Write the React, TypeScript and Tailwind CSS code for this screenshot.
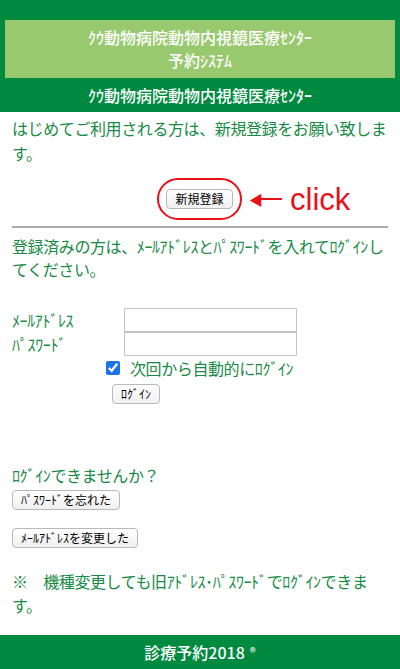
import React from 'react';

const font = { fontFamily: '"Noto Sans CJK JP", "Noto Sans", sans-serif' };

const SmallButton: React.FC<{ children: React.ReactNode; className?: string }> = ({ children, className = '' }) => (
  <button
    type="button"
    className={`h-[20px] px-[8px] text-[12px] leading-none tracking-normal text-black bg-gradient-to-b from-white to-[#f0f0f0] border border-[#b8b8b8] rounded-[4px] ${className}`}
  >
    {children}
  </button>
);

const App: React.FC = () => {
  return (
    <div className="w-[400px] h-[669px] bg-white flex flex-col text-[#178a45]" style={font}>
      {/* header */}
      <div className="bg-[#008a40] pt-[20px]">
        <div className="mx-[5px] h-[58px] bg-[#99c96f] flex flex-col items-center justify-center text-white text-[16px] leading-[23px] font-medium">
          <div>ｸｳ動物病院動物内視鏡医療ｾﾝﾀｰ</div>
          <div>予約ｼｽﾃﾑ</div>
        </div>
        <div className="h-[34px] flex items-center justify-center text-white text-[16px] font-medium">
          ｸｳ動物病院動物内視鏡医療ｾﾝﾀｰ
        </div>
      </div>

      <div className="px-[12px] flex-1 tracking-[-0.4px]">
        <p className="mt-[4px] text-[16px] leading-[25px]">
          はじめてご利用される方は、新規登録をお願い致します。
        </p>

        <div className="mt-[12px] h-[42px] flex items-center tracking-normal">
          <div className="ml-[145px] w-[85px] h-[42px] rounded-[21px] border-2 border-[#e8101a] flex items-center justify-center">
            <SmallButton className="px-[7px]">新規登録</SmallButton>
          </div>
          <div className="ml-[7px] flex items-center">
            <span className="text-[#e8101a] text-[14px] leading-none">◀</span>
            <span className="w-[22px] h-[2px] bg-[#e8101a] -ml-[3px]"></span>
          </div>
          <span className="ml-[8px] text-[#e8101a] text-[31px] leading-none" style={{ fontFamily: '"Liberation Sans", sans-serif' }}>
            click
          </span>
        </div>

        <hr className="mt-[6px] border-0 h-[2px] bg-[#a9a9a9]" />

        <p className="mt-[7px] text-[16px] leading-[23px]">
          登録済みの方は、ﾒｰﾙｱﾄﾞﾚｽとﾊﾟｽﾜｰﾄﾞを入れてﾛｸﾞｲﾝしてください。
        </p>

        <div className="mt-[27px] flex flex-col">
          <div className="flex items-center h-[24px]">
            <span className="w-[112px] text-[16px]">ﾒｰﾙｱﾄﾞﾚｽ</span>
            <input className="w-[173px] h-[24px] border border-[#c4c4c4] outline-none" />
          </div>
          <div className="flex items-center h-[24px]">
            <span className="w-[112px] text-[16px]">ﾊﾟｽﾜｰﾄﾞ</span>
            <input type="password" className="w-[173px] h-[24px] border border-[#c4c4c4] outline-none" />
          </div>
          <label className="mt-[1px] ml-[94px] flex items-center gap-[10px] h-[22px] text-[16px]">
            <input type="checkbox" defaultChecked className="w-[14px] h-[14px] accent-[#1a73e8]" />
            <span>次回から自動的にﾛｸﾞｲﾝ</span>
          </label>
          <div className="ml-[100px] mt-[1px]">
            <SmallButton>ﾛｸﾞｲﾝ</SmallButton>
          </div>
        </div>

        <p className="mt-[60px] text-[16px] leading-[22px]">ﾛｸﾞｲﾝできませんか？</p>
        <SmallButton>ﾊﾟｽﾜｰﾄﾞを忘れた</SmallButton>
        <div>
          <SmallButton className="mt-[18px]">ﾒｰﾙｱﾄﾞﾚｽを変更した</SmallButton>
        </div>

        <p className="mt-[21px] text-[16px] leading-[24px]">
          ※　機種変更しても旧ｱﾄﾞﾚｽ･ﾊﾟｽﾜｰﾄﾞでﾛｸﾞｲﾝできます。
        </p>
      </div>

      <footer className="h-[34px] bg-[#008a40] flex items-center justify-center text-white text-[16px] font-medium">
        診療予約2018 <span className="ml-[5px] text-[12px]">®</span>
      </footer>
    </div>
  );
};

export default App;
